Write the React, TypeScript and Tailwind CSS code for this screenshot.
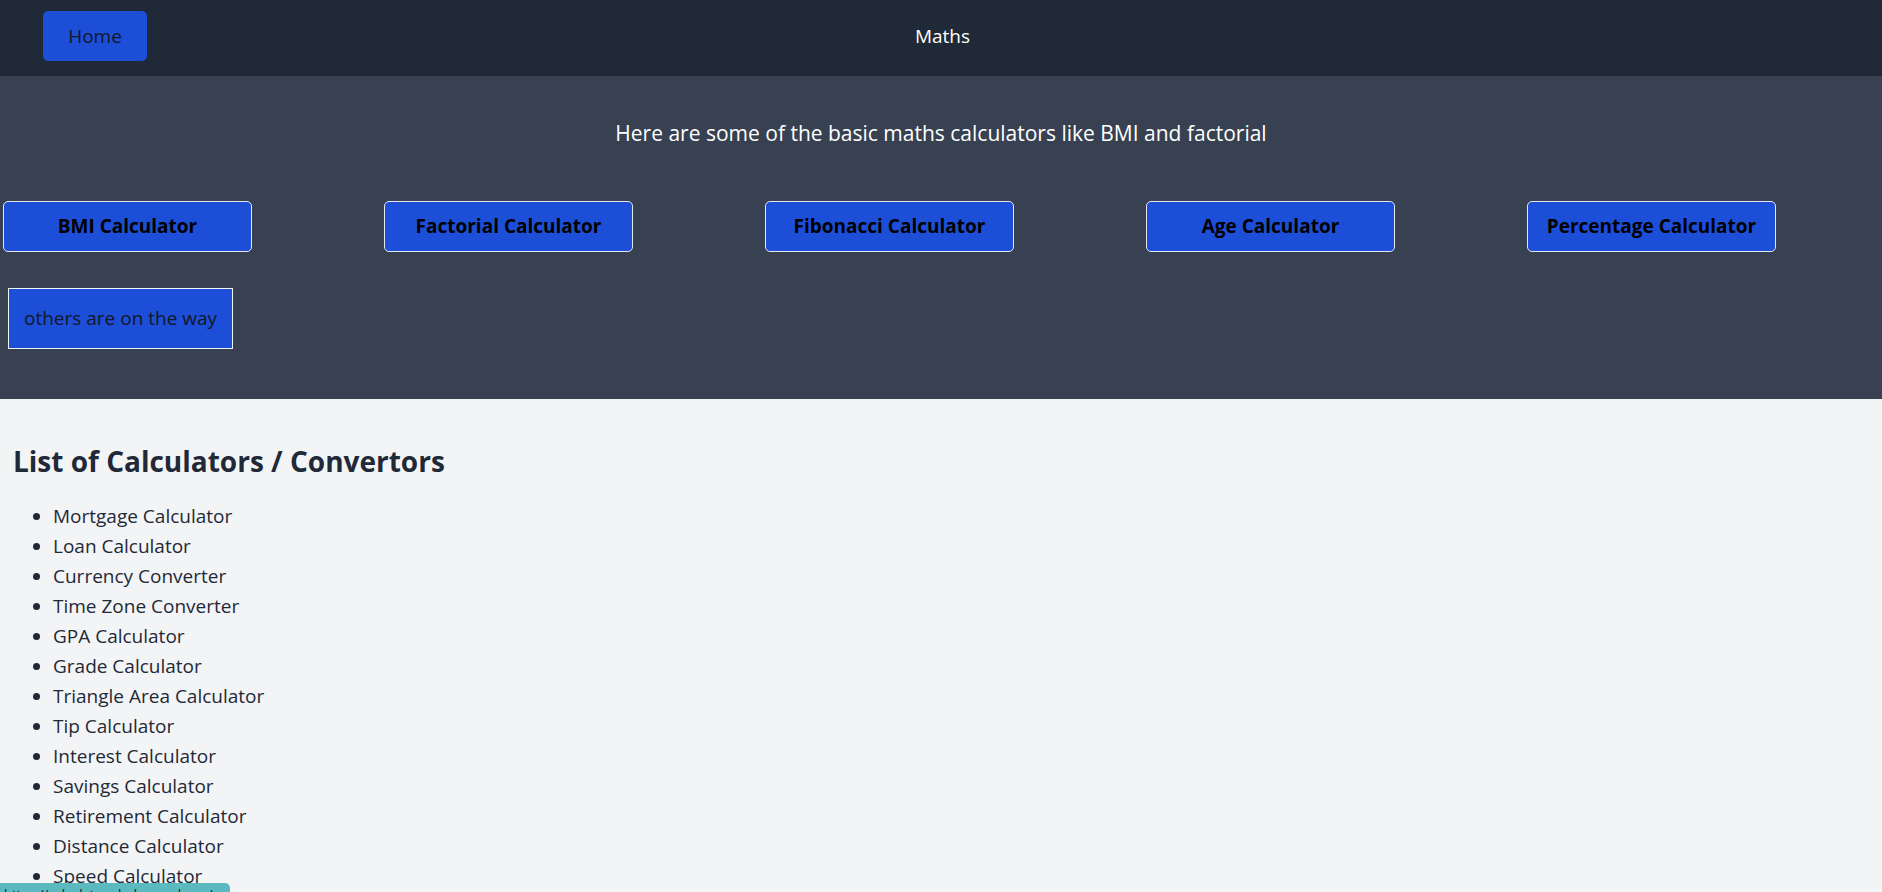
import React from 'react';

const quickCalcs = [
  'BMI Calculator',
  'Factorial Calculator',
  'Fibonacci Calculator',
  'Age Calculator',
  'Percentage Calculator',
];

const allCalcs = [
  'Mortgage Calculator',
  'Loan Calculator',
  'Currency Converter',
  'Time Zone Converter',
  'GPA Calculator',
  'Grade Calculator',
  'Triangle Area Calculator',
  'Tip Calculator',
  'Interest Calculator',
  'Savings Calculator',
  'Retirement Calculator',
  'Distance Calculator',
  'Speed Calculator',
  'Temperature Converter',
  'Length Converter',
];

export default function App() {
  return (
    <div className="min-h-screen bg-[#f3f4f6] font-['Open_Sans',sans-serif]">
      {/* top nav */}
      <header className="h-[76px] bg-[#1f2937] grid grid-cols-[1fr_auto_1fr] items-start pt-[11px] px-[43px]">
        <div>
          <button className="h-[50px] w-[104px] rounded-[5px] bg-[#1d4ed8] text-[19px] text-[#111827]">
            Home
          </button>
        </div>
        <span className="h-[50px] flex items-center pl-[3px] text-white text-[19px]">Maths</span>
        <div />
      </header>

      {/* basic calculators */}
      <section className="h-[323px] bg-[#374151] pt-[42px]">
        <p className="text-center text-white text-[21px] leading-[30px]">
          Here are some of the basic maths calculators like BMI and factorial
        </p>
        <div className="flex gap-[132px] pl-[3px] mt-[53px]">
          {quickCalcs.map((name) => (
            <button
              key={name}
              className="w-[249px] h-[51px] shrink-0 rounded-[5px] border border-[#e5e7eb] bg-[#1d4ed8] text-[19px] font-bold text-black"
            >
              {name}
            </button>
          ))}
        </div>
        <div className="ml-[8px] mt-[36px] inline-flex h-[61px] items-center border border-[#f3f4f6] bg-[#1d4ed8] px-[15px] text-[19px] text-[#111827]">
          others are on the way
        </div>
      </section>

      {/* list */}
      <section className="px-[13px] pt-[42px] pb-6 text-[#1f2937]">
        <h2 className="text-[28px] leading-[40px] font-bold">List of Calculators / Convertors</h2>
        <ul className="list-disc pl-[40px] mt-[20px] text-[19px] leading-[30px]">
          {allCalcs.map((c) => (
            <li key={c}>{c}</li>
          ))}
        </ul>
      </section>

      {/* browser link preview bubble */}
      <div className="fixed left-0 bottom-[-14px] h-[23px] w-[230px] overflow-hidden rounded-tr-[5px] bg-[#5bbabf] px-[4px] text-[13px] leading-[23px] text-[#111827]">
        https://calculators-hub.vercel.app/
      </div>
    </div>
  );
}
